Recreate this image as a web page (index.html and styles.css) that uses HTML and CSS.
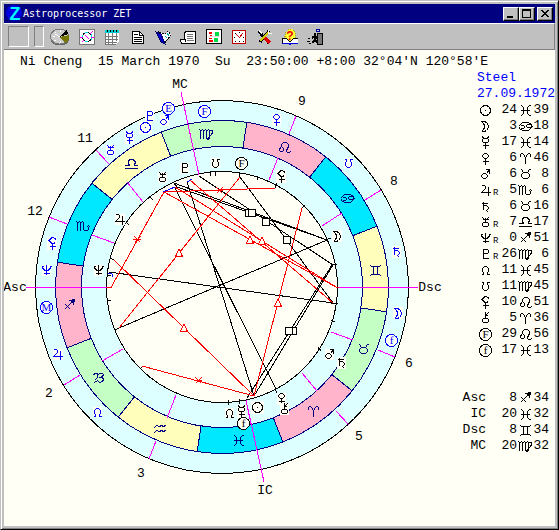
FILE: index.html
```html
<!DOCTYPE html>
<html lang="en">
<head>
<meta charset="utf-8">
<title>Astroprocessor ZET</title>
<link rel="stylesheet" href="styles.css">
</head>
<body>
<svg class="defs" aria-hidden="true">
  <defs>
    <symbol id="sun" viewBox="0 0 16 16"><rect class="plate" x="2" y="2" width="13" height="13"/><circle cx="8.5" cy="8.5" r="5"/><rect class="dot" x="8" y="8" width="1" height="1"/></symbol>
    <symbol id="moon" viewBox="0 0 16 16"><rect class="plate" x="3" y="2" width="10" height="12"/><path d="M4.500 3.500h3l2 1 2 3v2l-2 3-2 1h-3M4.500 3.500l2 2 1 2v2l-1 2-2 2"/></symbol>
    <symbol id="mercury" viewBox="0 0 16 16"><rect class="plate" x="4" y="2" width="9" height="13"/><path d="M5.500 2.500l1 2h4l1-2M6.500 4.500l-1 1v2l1 1h4l1-1v-2l-1-1M8.500 8.500v6M5.500 11.500h6"/></symbol>
    <symbol id="venus" viewBox="0 0 16 16"><rect class="plate" x="4" y="3" width="9" height="12"/><path d="M7.500 3.500h2l2 2v1l-2 2h-2l-2-2v-1zM8.500 8.500v6M5.500 11.500h6"/></symbol>
    <symbol id="mars" viewBox="0 0 16 16"><rect class="plate" x="4" y="3" width="9" height="11"/><path d="M6.500 7.500h2l2 2v1l-2 2h-2l-2-2v-1zM9.500 7.500l3-4M8.500 3.500h4v4"/></symbol>
    <symbol id="jupiter" viewBox="0 0 16 16"><rect class="plate" x="4" y="3" width="10" height="11"/><path d="M4.500 4.500l1-1h2l1 1v2l-4 4h9M11.500 4.500v9"/></symbol>
    <symbol id="saturn" viewBox="0 0 16 16"><rect class="plate" x="4" y="3" width="9" height="12"/><path d="M6.500 3.500v8M4.500 5.500h6M6.500 8.500l1-1h2l2 2v1l-2 2 2 2"/></symbol>
    <symbol id="uranus" viewBox="0 0 16 16"><rect class="plate" x="4" y="3" width="9" height="11"/><path d="M5.500 3.500l1 1v1l-1 1M11.500 3.500l-1 1v1l1 1M8.500 3.500v5M5.500 5.500h6M6.500 8.500h4l1 1v2l-1 1h-4l-1-1v-2z"/></symbol>
    <symbol id="neptune" viewBox="0 0 16 16"><rect class="plate" x="4" y="3" width="9" height="11"/><path d="M8.500 3v10M4.500 4v2l2 2h4l2-2V4M5.500 11.500h6M3.500 4.500h2M11.500 4.500h2"/></symbol>
    <symbol id="pluto" viewBox="0 0 16 16"><rect class="plate" x="4" y="3" width="9" height="11"/><path d="M5.500 3.500h5l1 1v2l-1 1h-4M6.500 3.500v9M5.500 12.500h6v-1"/></symbol>
    <symbol id="node" viewBox="0 0 16 16"><rect class="plate" x="4" y="3" width="9" height="10"/><path d="M4.500 12.500h2v-2l-1-1v-3l2-2h2l2 2v3l-1 1v2h2"/></symbol>
    <symbol id="snode" viewBox="0 0 16 16"><rect class="plate" x="4" y="3" width="9" height="10"/><path d="M4.500 4.500h2v2l-1 1v3l2 2h2l2-2v-3l-1-1v-2h2"/></symbol>
    <symbol id="lilith" viewBox="0 0 16 16"><rect class="plate" x="3" y="2" width="10" height="13"/><path d="M8.500 2.500l-2 1-2 2 2 2 2 1h2M7.500 3.500l-2 2 2 2M8.500 2.500l3 1v1M8.500 8.500v6M5.500 11.500h6M10.500 7.500l1 1"/></symbol>
    <symbol id="chiron" viewBox="0 0 16 16"><rect class="plate" x="4" y="2" width="9" height="12"/><path d="M8.500 2v6M8.500 5.500l3-3M8.500 4.500l3 2M6.500 8.500h4l1 1v2l-1 1h-4l-1-1v-2z"/></symbol>
    <symbol id="fortune" viewBox="0 0 16 16"><circle class="plate ring" cx="8.500" cy="8.500" r="6"/><text class="letter" x="8.500" y="12">F</text></symbol>
    <symbol id="fate" viewBox="0 0 16 16"><circle class="plate ring" cx="8.500" cy="8.500" r="6"/><text class="letter" x="8.500" y="12">f</text></symbol>
    <symbol id="east" viewBox="0 0 16 16"><circle class="plate ring" cx="8.500" cy="8.500" r="6"/><text class="letter" x="8.500" y="12">E</text></symbol>
    <symbol id="mid" viewBox="0 0 16 16"><circle class="plate ring" cx="8.500" cy="8.500" r="6"/><text class="letter" x="8.500" y="12">M</text></symbol>

    <symbol id="aries" viewBox="0 0 16 16"><path d="M3.500 6.500v-2l1-1h1l2 2 1 3v5M13.500 6.500v-2l-1-1h-1l-2 2-1 3"/></symbol>
    <symbol id="taurus" viewBox="0 0 16 16"><path d="M3.500 3.500h1l2 3h4l2-3h1M6.500 6.500l-2 2v2l2 2h4l2-2v-2l-2-2"/></symbol>
    <symbol id="gemini" viewBox="0 0 16 16"><path d="M3 3.500l2 1h7l2-1M3 13.500l2-1h7l2 1M6.500 4.500v8M10.500 4.500v8"/></symbol>
    <symbol id="cancer" viewBox="0 0 16 16"><path d="M1.500 8.500l4-4h6l3 2v2M15.500 8.500l-4 4h-6l-3-2v-2M3.500 7.500h3l1 1v1l-1 1h-3M13.500 9.500h-3l-1-1v-1l1-1h3"/></symbol>
    <symbol id="leo" viewBox="0 0 16 16"><path d="M5.500 8.500l-2 1v2l1 1h2l1-1v-2l-2-2v-2l2-2h3l2 2v2l-2 4v1l1 1h2l1-1"/></symbol>
    <symbol id="virgo" viewBox="0 0 16 16"><path d="M1.500 3.500l1 1v8M2.500 5.500l2-2 1 1v8M5.500 5.500l2-2 1 1v8l2 1M8.500 5.500l2-2 1 1v8l-2 1M11.500 4.500h3v2l-1 2-4 4"/></symbol>
    <symbol id="libra" viewBox="0 0 16 16"><path d="M2 12.500h13M2 9.500h4v-1l-1-1v-2l2-2h3l2 2v2l-1 1v1h4"/></symbol>
    <symbol id="scorpio" viewBox="0 0 16 16"><path d="M1.500 3.500l1 1v8M2.500 5.500l2-2 1 1v8M5.500 5.500l2-2 1 1v7l1 1h3l1-1v-3M11.500 9.500l2-2 2 2"/></symbol>
    <symbol id="sagittarius" viewBox="0 0 16 16"><path d="M3.500 12.500l9-9M4.500 7.500l5 5"/><path class="solid" d="M9.500 3.500l4-1-1 4-1-2z"/></symbol>
    <symbol id="capricorn" viewBox="0 0 16 16"><path d="M3.500 4.500l2-1h2v4l-3 3M7.500 5.500l2-2h3l1 1-1 2-3 1h3l1 2-1 2-3 1-2-2-3 2h-1"/></symbol>
    <symbol id="aquarius" viewBox="0 0 16 16"><path d="M2 7l3-3 2 2 3-2 1 2 3-2M2 12l3-3 2 2 3-2 1 2 3-2"/></symbol>
    <symbol id="pisces" viewBox="0 0 16 16"><path d="M3.500 3.500h1l2 2v6l-2 2h-1M13.500 3.500h-1l-2 2v6l2 2h1M4 8.500h9"/></symbol>

    <symbol id="trine" viewBox="0 0 10 10"><path d="M5 1L1.500 8.500h7z"/></symbol>
    <symbol id="square" viewBox="0 0 10 10"><rect x="1.500" y="1.500" width="7" height="7"/></symbol>
    <symbol id="sextile" viewBox="0 0 10 10"><path d="M1 5.500h8M2.500 2.500l6 6M8.500 2.500l-6 6"/></symbol>
  </defs>
</svg>

<main class="window">
  <header class="titlebar">
    <svg class="logo" viewBox="0 0 17 17" aria-hidden="true"><circle cx="8" cy="8" r="8"/><text x="9" y="15">Z</text></svg>
    <h1>Astroprocessor ZET</h1>
    <div class="controls">
      <button aria-label="Minimize"><svg viewBox="0 0 12 10"><path d="M2 8h6" stroke-width="2"/></svg></button>
      <button aria-label="Maximize"><svg viewBox="0 0 12 10"><path d="M1.500 1v7.500h8V1M1 1h9" /><path d="M1 1h9" stroke-width="2"/></svg></button>
      <button class="close" aria-label="Close"><svg viewBox="0 0 12 10"><path d="M2 1l7 7M9 1L2 8M3 1l7 7M10 1L3 8"/></svg></button>
    </div>
  </header>

  <nav class="toolbar" aria-label="Tools">
    <span class="well wide"></span><span class="well narrow"></span>
    <div class="tools">
      <button class="first" aria-label="Time"><svg class="big" viewBox="0 0 20 18"><ellipse cx="10" cy="10.500" rx="9.500" ry="7" fill="#666"/><ellipse cx="9.500" cy="8.500" rx="9" ry="7.500" fill="#ccc" stroke="#777"/><path d="M10 9l7-8 1 5z" fill="#000"/><path d="M10 9l9-2v4l-4 4z" fill="#770"/><path d="M10 2v2M3 8h2M5 4l1 1M4 13l2-1M10 13v2M10 9L5 6" stroke="#fff"/></svg></button>
      <button aria-label="Chart"><svg viewBox="0 0 16 16"><rect x=".5" y=".5" width="15" height="15" fill="#fff" stroke="#777"/><circle cx="8" cy="8" r="4.500" fill="none" stroke="#000"/><circle cx="8" cy="8" r="5" fill="none" stroke="#0dd" stroke-dasharray="3 4"/><path d="M1 8h3M12 8h3M3 13l2-2M11 5l3-3M6 6l4 4" stroke="#f0f"/></svg></button>
      <button aria-label="Calendar"><svg viewBox="0 0 16 16"><path d="M1 1h14v11l-3 3H1z" fill="#fff"/><path d="M1 2h14" stroke="#0cc" stroke-width="3"/><path d="M3 1v2M6 1v2M9 1v2M12 1v2" stroke="#000"/><path d="M1.500 4v11h10M4.500 4v11M8.500 4v11M12.500 4v8M1 7.500h13M1 10.500h13M1 13.500h12" fill="none" stroke="#777"/></svg></button>
      <button aria-label="Page"><svg viewBox="0 0 16 16"><path d="M2.500 2.500h7l4 4v8h-11z" fill="#fff" stroke="#000"/><path d="M9.500 2v4.500H13M4 5.500h4M4 8.500h8M4 10.500h8M4 12.500h8" fill="none" stroke="#000"/></svg></button>
      <button aria-label="Book"><svg viewBox="0 0 16 16"><path d="M4 3l6 2 3-3 3 4-7 9z" fill="#fff" stroke="#000" stroke-dasharray="2 1"/><path d="M1 3l5 2 4 10-4-2z" fill="#00c" stroke="#006"/><path d="M12 4l2 3M10 7l2 2" stroke="#0aa"/></svg></button>
      <button aria-label="Documents"><svg viewBox="0 0 16 16"><path d="M4.500 10V4l2-2h9v12h-14l-1-2v-2h5v3" fill="#fff" stroke="#000"/><path d="M7 5.500h6M7 7.500h6M7 9.500h6M7 11.500h7" stroke="#777"/></svg></button>
      <button aria-label="Table"><svg viewBox="0 0 16 16"><rect x=".5" y=".5" width="15" height="14" fill="#fff" stroke="#000"/><path d="M3 3h3v2H3zM4 6h2v2H4zM3 9h3v1H3zM3 11h4v2H3z" fill="#f00"/><path d="M9 3h4v5H9zM8 9h4v4H8z" fill="#0d4"/><path d="M2 7.500h12" stroke="#ddd"/></svg></button>
      <button aria-label="Clock"><svg viewBox="0 0 16 16"><rect x="1.500" y="1.500" width="13" height="13" fill="#fff" stroke="#b00"/><path d="M5.500 5.500l3 3 3-4" stroke="#c00" fill="none"/><path d="M8 3.500h1M3 8.500h1M12 8.500h1M8 12.500h1M4 4.500h1M4 12.500h1M12 12.500h1" stroke="#000"/></svg></button>
      <button aria-label="Settings"><svg viewBox="0 0 16 16"><path d="M2 2l2 3 8 9" fill="none" stroke="#000" stroke-width="3"/><path d="M12 2L3 13" stroke="#000" stroke-width="3"/><path d="M12 3L3 12" stroke="#cc0" stroke-width="2"/><path d="M8 9l5 5" stroke="#d00" stroke-width="3"/><path d="M11 1v3h4M2 1l3 4" stroke="#fff" fill="none"/></svg></button>
      <button aria-label="Help"><svg viewBox="0 0 16 16"><path d="M2 12l2-9 3-3h3l3 3 1 9z" fill="#ff3" stroke="#aa0" stroke-dasharray="1 1"/><path d="M0 9h4l4 4 4-4h4v5H9l-1 1-1-1H0z" fill="#fff" stroke="#000"/><path d="M0 14.500h7l1 1 1-1h7" fill="none" stroke="#00d"/><text class="help" x="8" y="11">?</text></svg></button>
      <button aria-label="Exit"><svg viewBox="0 0 16 16"><rect x="9.500" y=".5" width="3" height="2" fill="#ccc" stroke="#009"/><path d="M10 4h5v11h-5z" fill="#777" stroke="#000"/><path d="M8 4v3l-3 2M8 7v4l-3 3M8 8l3 1M8 10l2 4" stroke="#000" stroke-width="2" fill="none"/><path d="M1 9h2M0 12h3M2 14h2" stroke="#000"/></svg></button>
    </div>
  </nav>

  <section class="sheet">
    <p class="subject">Ni Cheng&nbsp; 15 March 1970&nbsp; Su&nbsp; 23:50:00 +8:00 32°04'N 120°58'E</p>
    <div class="body">
      <svg class="chart" viewBox="4 70 456 430" role="img" aria-label="Natal chart wheel">
        <circle class="outer" cx="222" cy="287" r="186.500"/>
        <g class="elements">
          <circle class="earth" cx="222" cy="287" r="153.500" pathLength="360" transform="rotate(8.570 222 287)"/>
          <circle class="fire" cx="222" cy="287" r="153.500" pathLength="360" transform="rotate(38.570 222 287)"/>
          <circle class="water" cx="222" cy="287" r="153.500" pathLength="360" transform="rotate(68.570 222 287)"/>
          <circle class="air" cx="222" cy="287" r="153.500" pathLength="360" transform="rotate(98.570 222 287)"/>
        </g>
        <g class="zodiac">
          <circle cx="222" cy="287" r="166.500"/>
          <circle cx="222" cy="287" r="140.500"/>
          <path id="edge" d="M362.500 287h26" transform="rotate(8.570 222 287)"/>
          <use href="#edge" transform="rotate(30 222 287)"/><use href="#edge" transform="rotate(60 222 287)"/><use href="#edge" transform="rotate(90 222 287)"/>
          <use href="#edge" transform="rotate(120 222 287)"/><use href="#edge" transform="rotate(150 222 287)"/><use href="#edge" transform="rotate(180 222 287)"/>
          <use href="#edge" transform="rotate(210 222 287)"/><use href="#edge" transform="rotate(240 222 287)"/><use href="#edge" transform="rotate(270 222 287)"/>
          <use href="#edge" transform="rotate(300 222 287)"/><use href="#edge" transform="rotate(330 222 287)"/>
        </g>
        <circle class="inner" cx="222" cy="287" r="115.500"/>

        <path class="ticks" d="M150 197l3 3M126 222l3 3M110 258l4 2M107 275h4M107 300h4M115 330l4-2M140 369l3-3M228.500 400v5M239.500 399v5M275 389l2 4M318 347l3 4M331 320l4 2M331 303h7M331 265l6-1M325 240l6-2M302 208l3-3M275 188l2-5M257 180l1-4M239 173l1 4M215.500 171v5M210.500 171v5"/>
        <path class="cusps" d="M26 287.500h81M337 287.500h81M181 92l18 83M246 400l18 82M96 150l13 14M127 182l16 20M49 217l18 7M92 235l22 8M296 116l-7 18M278 158l-9 22M381 190l-16 10M342 213l-20 13M395 357l-17-7M353 340l-22-8M349 425l-13-14M317 391l-15-18M149 459l7-18M167 418l9-23M64 385l16-10M102 361l21-12"/>

        <path class="hard" d="M240 177L333 303M174 183L327 240M177 187L327 240M199 176L333 265M327 240L119 328M332 265L247 398M333 265L254 396M109 272L333 303M175 188L276 389M187 182L254 396M174 183l3 4"/>
        <path class="soft" d="M107 287.500h4L164 192L275 188M164 192L336 287M175 187L336 287h3M190 180L333 303M240 177L119 328M114 260L254 396M142 366L254 396M302 208L254 396"/>
        <path class="minor" d="M163 192l12-5M187 182l5-3M108 273l4 1v3"/>
        <g class="marks hard">
          <use href="#square" x="244" y="208" width="10" height="10"/><use href="#square" x="247" y="208" width="10" height="10"/><use href="#square" x="261" y="217" width="10" height="10"/>
          <use href="#square" x="282" y="235" width="10" height="10"/><use href="#square" x="288" y="326" width="10" height="10"/><use href="#square" x="284" y="326" width="10" height="10"/>
        </g>
        <g class="marks soft">
          <use href="#trine" x="257" y="236" width="10" height="10"/><use href="#trine" x="245" y="235" width="10" height="10"/><use href="#trine" x="174" y="248" width="10" height="10"/>
          <use href="#trine" x="179" y="323" width="10" height="10"/><use href="#trine" x="273" y="298" width="10" height="10"/>
          <use href="#sextile" x="132" y="234" width="10" height="10"/><use href="#sextile" x="214" y="185" width="10" height="10"/><use href="#sextile" x="193" y="375" width="10" height="10"/>
        </g>

        <g class="glyphs signs">
          <use href="#virgo" x="198" y="126" width="16" height="16"/><use href="#leo" x="276" y="139" width="16" height="16"/><use href="#cancer" x="339" y="190" width="16" height="16"/>
          <use href="#gemini" x="367" y="262" width="16" height="16"/><use href="#taurus" x="355" y="341" width="16" height="16"/><use href="#aries" x="305" y="403" width="16" height="16"/>
          <use href="#pisces" x="230" y="432" width="16" height="16"/><use href="#aquarius" x="152" y="421" width="16" height="16"/><use href="#capricorn" x="90" y="370" width="16" height="16"/>
          <use href="#sagittarius" x="61" y="297" width="16" height="16"/><use href="#scorpio" x="75" y="218" width="16" height="16"/><use href="#libra" x="123" y="156" width="16" height="16"/>
        </g>
        <g class="glyphs transit">
          <use href="#uranus" x="102" y="142" width="16" height="16"/><use href="#mercury" x="121" y="129" width="16" height="16"/><use href="#sun" x="137" y="119" width="16" height="16"/>
          <use href="#pluto" x="141" y="108" width="16" height="16"/><use href="#mars" x="156" y="112" width="16" height="16"/><use href="#east" x="160" y="100" width="16" height="16"/>
          <use href="#fortune" x="196" y="103" width="16" height="16"/><use href="#venus" x="268" y="111" width="16" height="16"/><use href="#snode" x="340" y="155" width="16" height="16"/>
          <use href="#saturn" x="388" y="243" width="16" height="16"/><use href="#moon" x="390" y="305" width="16" height="16"/><use href="#fate" x="383" y="332" width="16" height="16"/>
          <use href="#node" x="89" y="404" width="16" height="16"/><use href="#jupiter" x="49" y="346" width="16" height="16"/><use href="#mid" x="38" y="299" width="16" height="16"/>
          <use href="#neptune" x="38" y="262" width="16" height="16"/><use href="#lilith" x="44" y="235" width="16" height="16"/>
        </g>
        <g class="glyphs natal">
          <use href="#uranus" x="154" y="169" width="16" height="16"/><use href="#pluto" x="176" y="160" width="16" height="16"/><use href="#snode" x="207" y="155" width="16" height="16"/>
          <use href="#fortune" x="233" y="155" width="16" height="16"/><use href="#lilith" x="273" y="168" width="16" height="16"/><use href="#moon" x="329" y="228" width="16" height="16"/>
          <use href="#mars" x="321" y="346" width="16" height="16"/><use href="#saturn" x="333" y="354" width="16" height="16"/><use href="#venus" x="273" y="390" width="16" height="16"/>
          <use href="#chiron" x="276" y="401" width="16" height="16"/><use href="#sun" x="249" y="399" width="16" height="16"/><use href="#node" x="221" y="405" width="16" height="16"/>
          <use href="#mercury" x="233" y="403" width="16" height="16"/><use href="#fate" x="235" y="415" width="16" height="16"/><use href="#neptune" x="90" y="262" width="16" height="16"/>
          <use href="#jupiter" x="111" y="211" width="16" height="16"/>
        </g>
        <path class="cusps" d="M246 400l5 24"/>
        <g class="labels">
          <text x="180" y="88">MC</text><text x="302" y="105">9</text><text x="394" y="185">8</text><text x="430" y="291">Dsc</text><text x="409" y="367">6</text><text x="359" y="440">5</text>
          <text x="265" y="494">IC</text><text x="141" y="477">3</text><text x="49" y="397">2</text><text x="15" y="291">Asc</text><text x="35" y="215">12</text><text x="85" y="142">11</text>
        </g>
      </svg>

      <aside class="positions">
        <p class="transit-name">Steel<br>27.09.1972</p>
        <table>
          <tbody class="planets">
            <tr><th scope="row"><svg aria-label="Sun"><use href="#sun"/></svg></th><td>24</td><td class="sign"><svg aria-label="Pisces"><use href="#pisces"/></svg></td><td>39</td></tr>
            <tr><th scope="row"><svg aria-label="Moon"><use href="#moon"/></svg></th><td>3</td><td class="sign"><svg aria-label="Cancer"><use href="#cancer"/></svg></td><td>18</td></tr>
            <tr><th scope="row"><svg aria-label="Mercury"><use href="#mercury"/></svg></th><td>17</td><td class="sign"><svg aria-label="Pisces"><use href="#pisces"/></svg></td><td>14</td></tr>
            <tr><th scope="row"><svg aria-label="Venus"><use href="#venus"/></svg></th><td>6</td><td class="sign"><svg aria-label="Aries"><use href="#aries"/></svg></td><td>46</td></tr>
            <tr><th scope="row"><svg aria-label="Mars"><use href="#mars"/></svg></th><td>6</td><td class="sign"><svg aria-label="Taurus"><use href="#taurus"/></svg></td><td>8</td></tr>
            <tr><th scope="row"><svg aria-label="Jupiter"><use href="#jupiter"/></svg><small>R</small></th><td>5</td><td class="sign"><svg aria-label="Scorpio"><use href="#scorpio"/></svg></td><td>6</td></tr>
            <tr><th scope="row"><svg aria-label="Saturn"><use href="#saturn"/></svg></th><td>6</td><td class="sign"><svg aria-label="Taurus"><use href="#taurus"/></svg></td><td>16</td></tr>
            <tr><th scope="row"><svg aria-label="Uranus"><use href="#uranus"/></svg><small>R</small></th><td>7</td><td class="sign"><svg aria-label="Libra"><use href="#libra"/></svg></td><td>17</td></tr>
            <tr><th scope="row"><svg aria-label="Neptune"><use href="#neptune"/></svg><small>R</small></th><td>0</td><td class="sign"><svg aria-label="Sagittarius"><use href="#sagittarius"/></svg></td><td>51</td></tr>
            <tr><th scope="row"><svg aria-label="Pluto"><use href="#pluto"/></svg><small>R</small></th><td>26</td><td class="sign"><svg aria-label="Virgo"><use href="#virgo"/></svg></td><td>6</td></tr>
            <tr><th scope="row"><svg aria-label="North node"><use href="#node"/></svg></th><td>11</td><td class="sign"><svg aria-label="Pisces"><use href="#pisces"/></svg></td><td>45</td></tr>
            <tr><th scope="row"><svg aria-label="South node"><use href="#snode"/></svg></th><td>11</td><td class="sign"><svg aria-label="Virgo"><use href="#virgo"/></svg></td><td>45</td></tr>
            <tr><th scope="row"><svg aria-label="Lilith"><use href="#lilith"/></svg></th><td>10</td><td class="sign"><svg aria-label="Leo"><use href="#leo"/></svg></td><td>51</td></tr>
            <tr><th scope="row"><svg aria-label="Chiron"><use href="#chiron"/></svg></th><td>5</td><td class="sign"><svg aria-label="Aries"><use href="#aries"/></svg></td><td>36</td></tr>
            <tr><th scope="row"><svg aria-label="Fortune"><use href="#fortune"/></svg></th><td>29</td><td class="sign"><svg aria-label="Leo"><use href="#leo"/></svg></td><td>56</td></tr>
            <tr><th scope="row"><svg aria-label="Fate"><use href="#fate"/></svg></th><td>17</td><td class="sign"><svg aria-label="Pisces"><use href="#pisces"/></svg></td><td>13</td></tr>
          </tbody>
        </table>
        <table class="angles">
          <tbody>
            <tr><th scope="row">Asc</th><td>8</td><td class="sign"><svg aria-label="Sagittarius"><use href="#sagittarius"/></svg></td><td>34</td></tr>
            <tr><th scope="row">IC</th><td>20</td><td class="sign"><svg aria-label="Pisces"><use href="#pisces"/></svg></td><td>32</td></tr>
            <tr><th scope="row">Dsc</th><td>8</td><td class="sign"><svg aria-label="Gemini"><use href="#gemini"/></svg></td><td>34</td></tr>
            <tr><th scope="row">MC</th><td>20</td><td class="sign"><svg aria-label="Virgo"><use href="#virgo"/></svg></td><td>32</td></tr>
          </tbody>
        </table>
      </aside>
    </div>
  </section>
</main>
</body>
</html>
```
FILE: styles.css
```css
* { box-sizing: border-box; }

body {
  margin: 0;
  background: #c0c0c0;
  color: #000;
  font: 13px/16px "Liberation Mono", "Courier New", monospace;
}

.defs { position: absolute; width: 0; height: 0; }

.window {
  display: flex;
  flex-direction: column;
  min-height: 100vh;
  padding: 2px;
  background: #c0c0c0;
  border: 1px solid #c0c0c0;
  border-right-color: #000;
  border-bottom-color: #000;
  box-shadow: inset 1px 1px #fff, inset -1px -1px #808080;
}

/* Title bar */
.titlebar {
  display: flex;
  align-items: center;
  height: 19px;
  margin: 1px 1px 0;
  padding: 0 2px;
  background: #000080;
  color: #fff;
}
.logo { width: 17px; height: 17px; overflow: visible; }
.logo circle { fill: #0000e0; }
.logo text { fill: #00ffff; font: bold 18px "Liberation Sans", sans-serif; text-anchor: middle; }
.titlebar h1 { flex: 1; margin: 0; font: 10px/16px "DejaVu Sans Mono", monospace; }
.controls { display: flex; }
.controls button {
  display: grid;
  place-items: center;
  width: 16px;
  height: 14px;
  padding: 0;
  background: #c0c0c0;
  border: 1px solid;
  border-color: #fff #000 #000 #fff;
  box-shadow: inset -1px -1px #808080;
}
.controls .close { margin-left: 2px; }
.controls svg { width: 12px; height: 10px; fill: none; stroke: #000; shape-rendering: crispEdges; }

/* Toolbar */
.toolbar {
  display: flex;
  align-items: center;
  height: 27px;
  margin: 0 1px;
  padding-left: 4px;
  border-top: 1px solid #fff;
  border-bottom: 1px solid #808080;
  border-right: 1px solid #808080;
}
.well { height: 21px; border: 1px solid; border-color: #808080 #fff #fff #808080; }
.wide { width: 21px; margin-right: 5px; }
.narrow { width: 10px; margin-right: 2px; }
.tools { display: flex; width: 282px; }
.tools button {
  display: grid;
  flex: 1;
  place-items: center;
  padding: 0;
  background: none;
  border: 0;
}
.tools .first { flex: 0 0 28px; }
.tools svg { width: 16px; height: 16px; shape-rendering: crispEdges; }
.tools .big { width: 20px; height: 18px; }
.help { fill: #e00; font: bold 12px "Liberation Sans", sans-serif; text-anchor: middle; }

/* Sheet */
.sheet {
  flex: 1;
  margin: 0 1px 1px;
  overflow: hidden;
  background: #fffff6;
}
.subject { margin: 0; padding: 4px 0 0 16px; white-space: nowrap; }
.body { display: grid; grid-template-columns: 1fr 95px; align-items: start; }

/* Wheel */
.chart { display: block; width: 100%; fill: none; shape-rendering: crispEdges; }
.outer { fill: #ddffff; stroke: #000; }
.inner { fill: #fffff6; stroke: #000; }
.elements circle { stroke-width: 26; stroke-dasharray: 30 90; }
.elements .earth { stroke: #c4ffc4; }
.elements .fire { stroke: #ffb4cc; }
.elements .water { stroke: #00e8ff; }
.elements .air { stroke: #ffffbb; }
.zodiac { stroke: #000080; }
.ticks, .hard { stroke: #000; }
.cusps { stroke: #ff00ff; }
.soft { stroke: #ff0000; }
.minor { stroke: #0000ff; }
.marks { fill: #fffff6; }
.labels { fill: #000; text-anchor: middle; }

/* Glyphs */
.glyphs, .positions svg { fill: none; stroke: currentColor; shape-rendering: crispEdges; }
.signs { color: #000080; }
.transit { color: #0000ff; }
.natal { color: #000; }
.plate { fill: #fffff6; stroke: none; }
.ring { stroke: currentColor; }
.dot, .solid { fill: currentColor; }
.dot { stroke: none; }
.letter { fill: currentColor; stroke: none; font: 11px "Liberation Serif", serif; text-anchor: middle; }

/* Positions */
.positions { white-space: nowrap; }
.transit-name { margin: 0; padding-left: 17px; color: #0000ff; }
.positions table { width: 89px; table-layout: fixed; border-collapse: collapse; }
.positions th { width: 37px; height: 16px; padding: 0 0 0 17px; font-weight: normal; text-align: left; }
.positions td { height: 16px; padding: 0; text-align: right; }
.positions .sign { width: 16px; }
.positions td:last-child { width: 16px; }
.positions svg { display: block; width: 16px; height: 16px; }
.positions th svg { float: left; }
.positions small { display: block; padding-top: 6px; font: 9px/10px "Liberation Mono", monospace; }
.angles { margin-top: 32px; }
.positions .angles th { padding: 0 11px 0 0; text-align: right; }
```
